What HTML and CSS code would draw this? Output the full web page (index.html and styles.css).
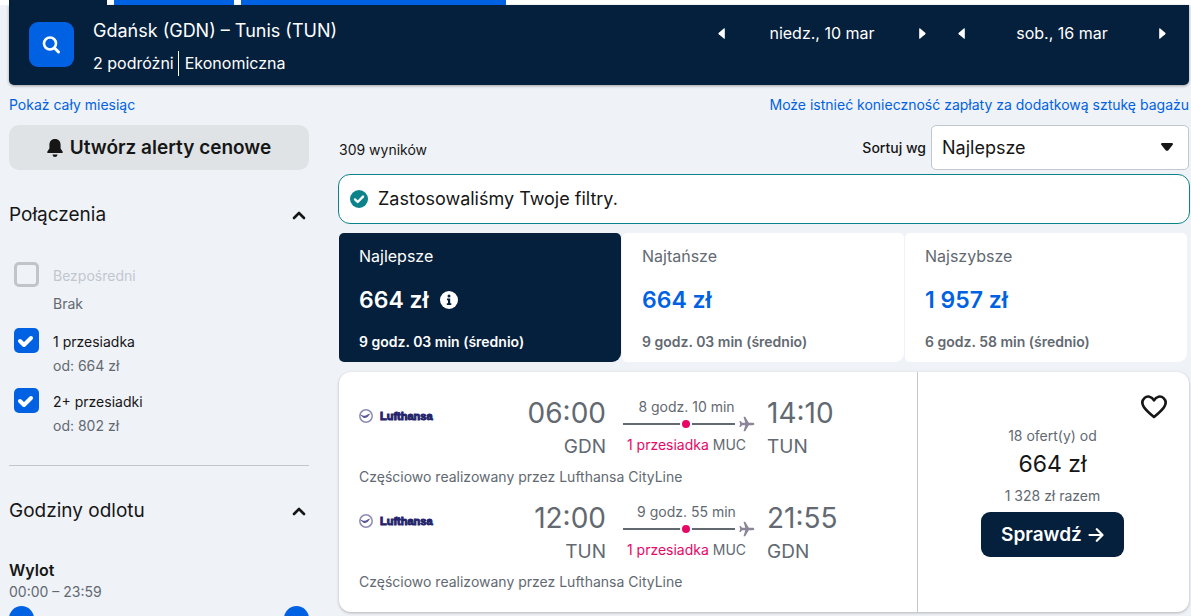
FILE: index.html
```
<!DOCTYPE html>
<html lang="pl">
<head>
<meta charset="UTF-8">
<title>Gdańsk – Tunis</title>
<meta name="viewport" content="width=device-width, initial-scale=1">
<link rel="stylesheet" href="styles.css">
</head>
<body>
<svg class="sprite" width="0" height="0">
	<symbol id="chevron" viewBox="0 0 14 9"><path d="M2 7 7 2l5 5" fill="none" stroke="currentColor" stroke-width="2.6" stroke-linecap="round" stroke-linejoin="round"/></symbol>
	<symbol id="left" viewBox="0 0 7 11"><path d="M6.8.8v9.4q0 1-1 .3L.8 6.2q-.8-.7 0-1.4L5.8.5q1-.7 1 .3z" fill="currentColor"/></symbol>
	<symbol id="right" viewBox="0 0 7 11"><path d="M.2.8v9.4q0 1 1 .3l5-4.300q.8-.7 0-1.400L1.200.5Q.2-.2.2.8z" fill="currentColor"/></symbol>
	<symbol id="plane" viewBox="0 0 16 16"><path d="M15.3 8c0-.8-.8-1.200-2-1.200H9.800L6.200.7H4.500l1.800 6.100H3.100L1.600 4.900H.4L1.200 8l-.8 3.100h1.200l1.500-1.900h3.200l-1.800 6.100h1.700l3.600-6.100h3.500c1.200 0 2-.4 2-1.200z" fill="#8c8599"/></symbol>
	<symbol id="crane" viewBox="0 0 14 14"><circle cx="7" cy="7" r="6.200" fill="#fff" stroke="#8d8bb5" stroke-width="1.500"/><path d="M.8 5.500c2 .2 3.200 1.500 5 1.300 1.600-.2 2.600-1.800 6-2.400-1.600.8-2.200 3.200-4.200 4.200-1.800.8-3.400.1-4.400-.9z" fill="#5a5894"/></symbol>
</svg>

<div class="tabs-strip">
	<span class="strip-tab active"></span>
	<span class="strip-tab"></span>
	<span class="strip-tab wide"></span>
</div>

<div class="page">
	<header class="search-bar">
		<button class="search-btn" aria-label="Szukaj">
			<svg width="20" height="20" viewBox="0 0 20 20"><circle cx="8" cy="8.500" r="6" fill="none" stroke="#fff" stroke-width="2.600"/><path d="M12.500 13l4 4" stroke="#fff" stroke-width="3" stroke-linecap="round"/></svg>
		</button>
		<div class="search-info">
			<div class="route">Gdańsk (GDN) – Tunis (TUN)</div>
			<div class="details"><span class="travellers">2 podróżni</span><span>Ekonomiczna</span></div>
		</div>
		<div class="dates">
			<div class="date">
				<button aria-label="Poprzedni dzień"><svg width="7" height="11"><use href="#left"/></svg></button>
				<span>niedz., 10 mar</span>
				<button aria-label="Następny dzień"><svg width="7" height="11"><use href="#right"/></svg></button>
			</div>
			<div class="date">
				<button aria-label="Poprzedni dzień"><svg width="7" height="11"><use href="#left"/></svg></button>
				<span>sob., 16 mar</span>
				<button aria-label="Następny dzień"><svg width="7" height="11"><use href="#right"/></svg></button>
			</div>
		</div>
	</header>

	<nav class="links">
		<a href="#">Pokaż cały miesiąc</a>
		<a href="#">Może istnieć konieczność zapłaty za dodatkową sztukę bagażu</a>
	</nav>

	<div class="columns">
		<aside class="filters">
			<button class="alert-btn">
				<svg width="16" height="18" viewBox="0 0 16 18"><path d="M8 0C4.300 0 2.400 2.600 2.400 6v3.500L.4 12.400Q-.1 14 1.200 14h13.600q1.300 0 .8-1.600l-2-2.900V6C13.600 2.600 11.700 0 8 0zM5.400 15.500h5.200Q10.100 18 8 18t-2.600-2.500z" fill="#161616"/></svg>
				Utwórz alerty cenowe
			</button>

			<button class="section-head">Połączenia <svg width="14" height="9"><use href="#chevron"/></svg></button>
			<div class="options">
				<div class="option disabled">
					<input type="checkbox" id="direct" disabled>
					<label for="direct">Bezpośredni</label>
					<span class="from">Brak</span>
				</div>
				<div class="option">
					<input type="checkbox" id="one" checked>
					<label for="one">1 przesiadka</label>
					<span class="from">od: 664 zł</span>
				</div>
				<div class="option">
					<input type="checkbox" id="two" checked>
					<label for="two">2+ przesiadki</label>
					<span class="from">od: 802 zł</span>
				</div>
			</div>

			<button class="section-head">Godziny odlotu <svg width="14" height="9"><use href="#chevron"/></svg></button>
			<div class="slider-title">Wylot</div>
			<div class="slider-value">00:00 – 23:59</div>
			<div class="slider">
				<input type="range" min="0" max="1439" value="0" aria-label="Wylot od">
				<input type="range" min="0" max="1439" value="1439" aria-label="Wylot do">
			</div>
		</aside>

		<main class="results">
			<div class="toolbar">
				<span class="count">309 wyników</span>
				<label for="sort">Sortuj wg</label>
				<div class="select-wrap">
					<select id="sort">
						<option>Najlepsze</option>
						<option>Najtańsze</option>
						<option>Najszybsze</option>
					</select>
					<svg class="caret" width="12" height="8" viewBox="0 0 12 8"><path d="M1.200 0h9.600q1.800.3.900 1.700L7.400 7.200q-1.400 1.200-2.800 0L.3 1.700Q-.6.3 1.200 0z" fill="#161616"/></svg>
				</div>
			</div>

			<div class="notice">
				<svg width="18" height="18" viewBox="0 0 18 18"><circle cx="9" cy="9" r="9" fill="#0c838a"/><path d="M5 9.400l2.700 2.600L13 6.600" fill="none" stroke="#fff" stroke-width="2.400" stroke-linecap="round" stroke-linejoin="round"/></svg>
				Zastosowaliśmy Twoje filtry.
			</div>

			<div class="sort-tabs">
				<button class="sort-tab selected">
					<span class="name">Najlepsze</span>
					<span class="price">664 zł <svg width="18" height="18" viewBox="0 0 18 18"><circle cx="9" cy="9" r="9" fill="#fff"/><circle cx="9" cy="5" r="1.500" fill="#05203c"/><path d="M7 7.500h3.200v4.800h1.100V14H6.800v-1.700h1.200V9.200H7z" fill="#05203c"/></svg></span>
					<span class="time">9 godz. 03 min (średnio)</span>
				</button>
				<button class="sort-tab">
					<span class="name">Najtańsze</span>
					<span class="price">664 zł</span>
					<span class="time">9 godz. 03 min (średnio)</span>
				</button>
				<button class="sort-tab">
					<span class="name">Najszybsze</span>
					<span class="price">1 957 zł</span>
					<span class="time">6 godz. 58 min (średnio)</span>
				</button>
			</div>

			<article class="ticket">
				<div class="legs">
					<div class="leg">
						<div class="airline"><svg width="14" height="14"><use href="#crane"/></svg>Lufthansa</div>
						<div class="point depart"><span class="hour">06:00</span><span class="code">GDN</span></div>
						<div class="stops">
							<span class="duration">8 godz. 10 min</span>
							<div class="line"><i class="track"><i class="dot"></i></i><svg width="16" height="16"><use href="#plane"/></svg></div>
							<span class="stop-info"><b>1 przesiadka</b> MUC</span>
						</div>
						<div class="point arrive"><span class="hour">14:10</span><span class="code">TUN</span></div>
					</div>
					<div class="operator">Częściowo realizowany przez Lufthansa CityLine</div>
					<div class="leg">
						<div class="airline"><svg width="14" height="14"><use href="#crane"/></svg>Lufthansa</div>
						<div class="point depart"><span class="hour">12:00</span><span class="code">TUN</span></div>
						<div class="stops">
							<span class="duration">9 godz. 55 min</span>
							<div class="line"><i class="track"><i class="dot"></i></i><svg width="16" height="16"><use href="#plane"/></svg></div>
							<span class="stop-info"><b>1 przesiadka</b> MUC</span>
						</div>
						<div class="point arrive"><span class="hour">21:55</span><span class="code">GDN</span></div>
					</div>
					<div class="operator">Częściowo realizowany przez Lufthansa CityLine</div>
				</div>
				<div class="offer">
					<button class="save" aria-label="Zapisz">
						<svg width="26" height="24" viewBox="0 0 26 24"><path d="M13 5.400C10.800 1.200 6.200.4 3.400 3.100.9 5.500 1 9.200 3 12.200c2.300 3.400 6 6.500 10 9.800 4-3.300 7.700-6.400 10-9.800 2-3 2.100-6.700-.4-9.100C19.800.4 15.200 1.200 13 5.400z" fill="none" stroke="#161616" stroke-width="2.600" stroke-linejoin="round"/></svg>
					</button>
					<span class="small">18 ofert(y) od</span>
					<span class="total">664 zł</span>
					<span class="small">1 328 zł razem</span>
					<button class="go">Sprawdź <svg width="16" height="16" viewBox="0 0 16 16"><path d="M1.500 8h12.500M8.800 2.200 14.500 8l-5.700 5.800" fill="none" stroke="#fff" stroke-width="2.200" stroke-linecap="round" stroke-linejoin="round"/></svg></button>
				</div>
			</article>
		</main>
	</div>
</div>
</body>
</html>
```

FILE: styles.css
```
* { box-sizing: border-box; }
html { scrollbar-width: none; }
body { margin: 0; background: #eff2f7; color: #161616; font-family: Inter, "Liberation Sans", sans-serif; font-size: 14px; line-height: 24px; }
button, select { font-family: inherit; color: inherit; line-height: inherit; }
button { border: 0; padding: 0; background: none; cursor: pointer; }
a { color: #0062e3; text-decoration: none; }
svg { display: block; flex: none; }
.sprite { position: absolute; }

.tabs-strip { display: flex; gap: 7px; height: 5px; padding-left: 9px; background: #fff; }
.strip-tab { width: 120px; background: #0062e3; }
.strip-tab.active { width: 98px; background: #05203c; }
.strip-tab.wide { width: 265px; }

.page { padding: 0 2px 0 9px; }

.search-bar { display: flex; height: 80px; padding-left: 20px; color: #fff; background: #05203c; border-radius: 0 0 5px 5px; box-shadow: 0 1px 3px rgba(37, 32, 31, .4); }
.search-btn { display: flex; align-items: center; justify-content: center; width: 45px; height: 45px; margin: 17px 19px 0 0; background: #0062e3; border-radius: 9px; }
.search-info { padding-top: 10px; }
.route { font-size: 18px; line-height: 32px; }
.details { display: flex; padding-top: 4px; font-size: 16px; line-height: 25px; }
.travellers { margin-right: 6px; padding-right: 4px; border-right: 1px solid #fff; }
.dates { display: flex; margin-left: auto; padding: 18px 23px 0 0; font-size: 16px; line-height: 20px; }
.date { display: flex; align-items: center; justify-content: space-between; width: 208px; height: 20px; margin-left: 32px; }

.links { display: flex; align-items: center; justify-content: space-between; height: 40px; }

.columns { display: flex; gap: 30px; }
.filters { flex: none; width: 300px; }
.results { flex: 1; min-width: 0; }

.alert-btn { display: flex; align-items: center; justify-content: center; gap: 7px; width: 100%; height: 45px; font-size: 19px; font-weight: 600; background: #dfe3e6; border-radius: 10px; }
.section-head { display: flex; align-items: center; justify-content: space-between; width: 100%; height: 90px; padding-right: 3px; font-size: 19px; }
.options { padding: 2px 0 27px 5px; border-bottom: 1px solid #c1c7cf; }
.option { display: grid; grid-template-columns: 39px 1fr; margin-bottom: 10px; }
.option:last-child { margin-bottom: 0; }
.option label { padding-top: 2px; }
.option .from { grid-column: 2; color: #626971; }
.option input { appearance: none; width: 25px; height: 25px; margin: 0; background: #0062e3 center no-repeat; border-radius: 5px; }
.option input:checked { background-image: url("data:image/svg+xml,%3Csvg xmlns='http://www.w3.org/2000/svg' width='19' height='14'%3E%3Cpath d='M3 7l4 4 7-7' fill='none' stroke='%23fff' stroke-width='4' stroke-linecap='round' stroke-linejoin='round'/%3E%3C/svg%3E"); }
.option.disabled { row-gap: 4px; margin-bottom: 12px; }
.option.disabled input { background: none; border: 3px solid #c1c4c9; }
.option.disabled label { color: #c1c7cf; }
.slider-title { padding-top: 2px; font-size: 16px; font-weight: 600; }
.slider-value { padding-bottom: 4px; color: #626971; line-height: 20px; }
.slider { display: grid; height: 25px; }
.slider input { grid-area: 1 / 1; appearance: none; width: 100%; height: 25px; margin: 0; background: none; pointer-events: none; }
.slider input::-webkit-slider-thumb { appearance: none; width: 25px; height: 25px; background: #0062e3; border-radius: 50%; pointer-events: auto; }

.toolbar { display: flex; align-items: center; height: 45px; }
.count { flex: 1; padding-top: 4px; }
.toolbar label { margin-right: 5px; font-weight: 500; }
.select-wrap { position: relative; width: 258px; }
.select-wrap select { appearance: none; display: block; width: 100%; height: 45px; padding: 0 10px; font-size: 18px; background: #fff; border: 1px solid #c1c7cf; border-radius: 5px; }
.caret { position: absolute; top: 18px; right: 16px; pointer-events: none; }

.notice { display: flex; align-items: center; gap: 10px; height: 50px; margin: 4px -1px 9px; padding-left: 11px; font-size: 18px; background: #fff; border: 1px solid #0c838a; border-radius: 12px; }

.sort-tabs { display: grid; grid-template-columns: 1fr 1fr 1fr; gap: 1px; padding-right: 2px; }
.sort-tab { display: flex; flex-direction: column; height: 129px; padding: 11px 20px 0; text-align: left; color: #626971; background: #fff; border-radius: 5px 5px 9px 5px; }
.sort-tab .name { font-size: 16px; }
.sort-tab .price { display: flex; align-items: center; gap: 11px; padding: 16px 0 14px; color: #0062e3; font-size: 23px; font-weight: 600; line-height: 32px; }
.sort-tab .time { font-size: 14px; font-weight: 600; }
.sort-tab.selected, .sort-tab.selected .price { color: #fff; }
.sort-tab.selected { background: #05203c; }

.ticket { display: flex; height: 240px; margin: 10px 0; background: #fff; border-radius: 12px; box-shadow: 0 1px 3px rgba(37, 32, 31, .3); }
.legs { flex: 1; padding: 20px; color: #626971; }
.leg { display: grid; grid-template-columns: 100px 1fr 132px 142px; height: 73px; }
.airline { display: flex; align-items: center; gap: 7px; height: 47px; color: #24246b; font: bold 11px "Liberation Sans", sans-serif; -webkit-text-stroke: 1px #24246b; }
.point { display: flex; flex-direction: column; }
.depart { align-items: flex-end; padding-right: 17px; }
.arrive { padding-left: 12px; }
.hour { font-size: 28px; line-height: 42px; }
.code { padding-top: 1px; font-size: 19px; }
.stops { text-align: center; line-height: 20px; padding-top: 5px; }
.duration, .stop-info { display: block; padding-right: 5px; white-space: nowrap; }
.stop-info { padding-top: 5px; }
.stop-info b { color: #e70866; font-weight: 400; }
.line { display: flex; align-items: center; justify-content: space-between; height: 13px; }
.track { display: flex; align-items: center; justify-content: center; width: 112px; height: 2px; padding-left: 14px; background: #626971; }
.dot { width: 12px; height: 12px; background: #e70866; border: 2px solid #fff; border-radius: 50%; }
.operator { height: 32px; line-height: 24px; }
.offer { display: flex; flex-direction: column; align-items: center; width: 272px; padding-top: 23px; padding-right: 2px; border-left: 1px solid #c1c7cf; }
.save { align-self: flex-end; margin: 0 20px 5px 0; }
.small { color: #626971; }
.total { font-size: 23px; line-height: 32px; padding-bottom: 4px; }
.go { display: flex; align-items: center; justify-content: center; gap: 6px; width: 143px; height: 45px; margin-top: 4px; color: #fff; font-size: 19px; font-weight: 600; background: #05203c; border-radius: 9px; }
```
